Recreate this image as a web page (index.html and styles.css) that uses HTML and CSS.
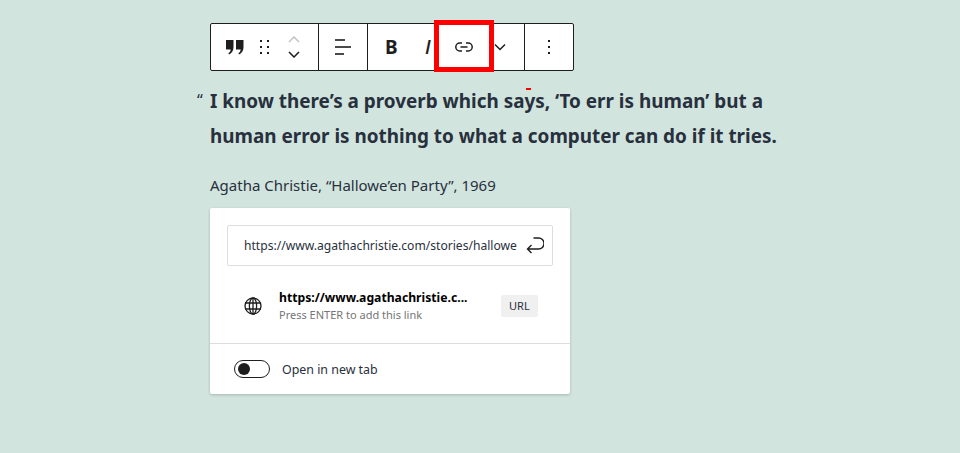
FILE: index.html
```html
<!DOCTYPE html>
<html lang="en">
<head>
<meta charset="utf-8">
<title>Quote block</title>
<link rel="stylesheet" href="styles.css">
</head>
<body>
<main class="editor">
  <div class="toolbar">
    <div class="group group-block">
      <svg class="ic-quote" width="18" height="16" viewBox="0 0 18 16"><path fill="#1e1e1e" d="M0 1h7.500v7c0 3.500-1.500 6-4.500 7.500l-.6-1.200c1.400-.8 2.200-2.300 2.300-3.800H0zM10 1h7.500v7c0 3.500-1.500 6-4.500 7.500l-.6-1.200c1.400-.8 2.200-2.300 2.300-3.800H10z"/></svg>
      <svg class="ic-drag" width="12" height="16" viewBox="0 0 12 16"><path fill="#1e1e1e" d="M1 1h2v2H1zM8 1h2v2H8zM1 7h2v2H1zM8 7h2v2H8zM1 13h2v2H1zM8 13h2v2H8z"/></svg>
      <span class="movers">
        <svg width="12" height="7" viewBox="0 0 12 7"><path fill="none" stroke="#c4c4c4" stroke-width="1.500" d="M1 6 6 1l5 5"/></svg>
        <svg width="12" height="7" viewBox="0 0 12 7"><path fill="none" stroke="#1e1e1e" stroke-width="1.500" d="M1 1l5 5 5-5"/></svg>
      </span>
    </div>
    <div class="group group-align">
      <svg width="17" height="17" viewBox="0 0 17 17"><path fill="#4a4a4a" d="M0 0h10v2H0zM0 7h16v2H0zM0 14h9v2H0z"/></svg>
    </div>
    <div class="group group-format">
      <span class="fmt-b">B</span>
      <span class="fmt-i">I</span>
      <svg class="ic-link" width="18" height="10" viewBox="0 0 18 10"><path fill="none" stroke="#1e1e1e" stroke-width="1.500" d="M7 1H4.800a4 4 0 0 0 0 8H7M11 1h2.200a4 4 0 0 1 0 8H11M5.500 5h7"/></svg>
      <svg class="ic-more" width="12" height="8" viewBox="0 0 12 8"><path fill="none" stroke="#1e1e1e" stroke-width="1.500" d="M1 1.500l5 5 5-5"/></svg>
    </div>
    <div class="group group-menu">
      <svg width="4" height="16" viewBox="0 0 4 16"><path fill="#1e1e1e" d="M1 1h2v2H1zM1 7h2v2H1zM1 13h2v2H1z"/></svg>
    </div>
    <span class="highlight"></span>
  </div>

  <blockquote class="quote">
    <span class="open-mark">“</span>
    <span class="cursor-mark"></span>
    <p class="quote-text">I know there’s a proverb which says, ‘To err is human’ but a human error is nothing to what a computer can do if it tries.</p>
    <cite class="citation">Agatha Christie, “Hallowe’en Party”, 1969</cite>
  </blockquote>

  <section class="popover">
    <div class="popover-top">
      <div class="url-input">
        <span class="url-value">https://www.agathachristie.com/stories/hallowe</span>
        <svg class="ic-enter" width="18" height="18" viewBox="0 0 18 18"><path fill="none" stroke="#1e1e1e" stroke-width="1.400" d="M7.500 1h5a4.800 4.800 0 0 1 0 11H1.500M5.500 8 1.500 12l4 4"/></svg>
      </div>
      <div class="suggestion">
        <svg class="ic-globe" width="18" height="18" viewBox="0 0 18 18"><g fill="none" stroke="#1e1e1e" stroke-width="1.300"><circle cx="9" cy="9" r="8"/><ellipse cx="9" cy="9" rx="3.600" ry="8"/><path d="M1 6h16M1 12h16M9 1v16"/></g></svg>
        <div class="suggestion-text">
          <strong class="suggestion-url">https://www.agathachristie.c...</strong>
          <span class="suggestion-hint">Press ENTER to add this link</span>
        </div>
        <span class="badge">URL</span>
      </div>
    </div>
    <div class="popover-bottom">
      <span class="toggle"><span class="knob"></span></span>
      <span class="toggle-label">Open in new tab</span>
    </div>
  </section>
</main>
</body>
</html>
```
FILE: styles.css
```css
* { box-sizing: border-box; }
html, body { margin: 0; height: 100%; }
body {
  background: #d1e4dd;
  color: #28303d;
  font-family: "Noto Sans", sans-serif;
  overflow: hidden;
}
.editor {
  width: 590px;
  margin-left: 210px;
  padding-top: 23px;
}
.toolbar {
  position: relative;
  display: flex;
  width: 364px;
  height: 48px;
  background: #fff;
  border: 1px solid #1e1e1e;
  border-radius: 2px;
}
.group {
  display: flex;
  align-items: center;
  flex: none;
  height: 100%;
  border-right: 1px solid #1e1e1e;
}
.group:last-of-type { border-right: 0; }
.group svg { flex: none; }
.group-block { width: 108px; padding-left: 15px; }
.ic-drag { margin-left: 15px; }
.movers {
  display: flex;
  flex-direction: column;
  gap: 8px;
  margin-left: 17px;
}
.group-align { width: 49px; padding-left: 16px; }
.group-format { width: 157px; padding-left: 17px; }
.fmt-b { flex: none; width: 40px; font-size: 19px; font-weight: 700; color: #1e1e1e; }
.fmt-i { flex: none; width: 12px; font-family: "Open Sans", sans-serif; font-size: 19px; font-style: italic; font-weight: 600; color: #1e1e1e; }
.ic-link { margin-left: 18px; }
.ic-more { margin-left: 21px; }
.group-menu { flex: 1; padding-left: 22px; }
.highlight {
  position: absolute;
  left: 223px;
  top: -4px;
  width: 60px;
  height: 52px;
  border: 5px solid #fe0000;
}
.quote {
  position: relative;
  margin: 0;
  padding-top: 13px;
}
.open-mark {
  position: absolute;
  left: -13px;
  top: 17px;
  font-size: 16px;
  line-height: 24px;
}
.cursor-mark {
  position: absolute;
  left: 316px;
  top: 17px;
  width: 5px;
  height: 2px;
  background: #fe0000;
}
.quote-text {
  margin: 0;
  font-size: 18.900px;
  font-weight: 700;
  line-height: 35px;
}
.citation {
  display: block;
  margin-top: 20px;
  font-size: 15px;
  font-style: normal;
  line-height: 22px;
}
.popover {
  width: 360px;
  height: 186px;
  margin-top: 12px;
  background: #fff;
  border-radius: 2px;
  box-shadow: 0 1px 3px rgba(0, 0, 0, .2);
}
.popover-top {
  height: 136px;
  padding: 17px 17px 0;
  border-bottom: 1px solid #ddd;
}
.url-input {
  display: flex;
  align-items: center;
  justify-content: space-between;
  height: 41px;
  padding: 0 8px 0 16px;
  border: 1px solid #ddd;
  border-radius: 2px;
  font-size: 12.100px;
}
.url-value { white-space: nowrap; }
.suggestion {
  display: flex;
  align-items: center;
  margin-top: 23px;
  padding-left: 17px;
}
.suggestion-text {
  display: flex;
  flex-direction: column;
  width: 222px;
  margin-left: 17px;
}
.suggestion-url {
  font-size: 12.200px;
  line-height: 18px;
  color: #000;
}
.suggestion-hint {
  font-size: 11px;
  line-height: 15px;
  color: #757575;
}
.badge {
  padding: 0 8px;
  background: #f0f0f0;
  border-radius: 2px;
  font-size: 11px;
  line-height: 22px;
}
.popover-bottom {
  display: flex;
  align-items: center;
  height: 50px;
  padding-left: 24px;
}
.toggle {
  display: flex;
  align-items: center;
  width: 36px;
  height: 18px;
  padding-left: 3px;
  border: 1px solid #1e1e1e;
  border-radius: 9px;
}
.knob {
  width: 12px;
  height: 12px;
  border-radius: 50%;
  background: #1e1e1e;
}
.toggle-label {
  margin-left: 12px;
  font-size: 12.400px;
}
```
